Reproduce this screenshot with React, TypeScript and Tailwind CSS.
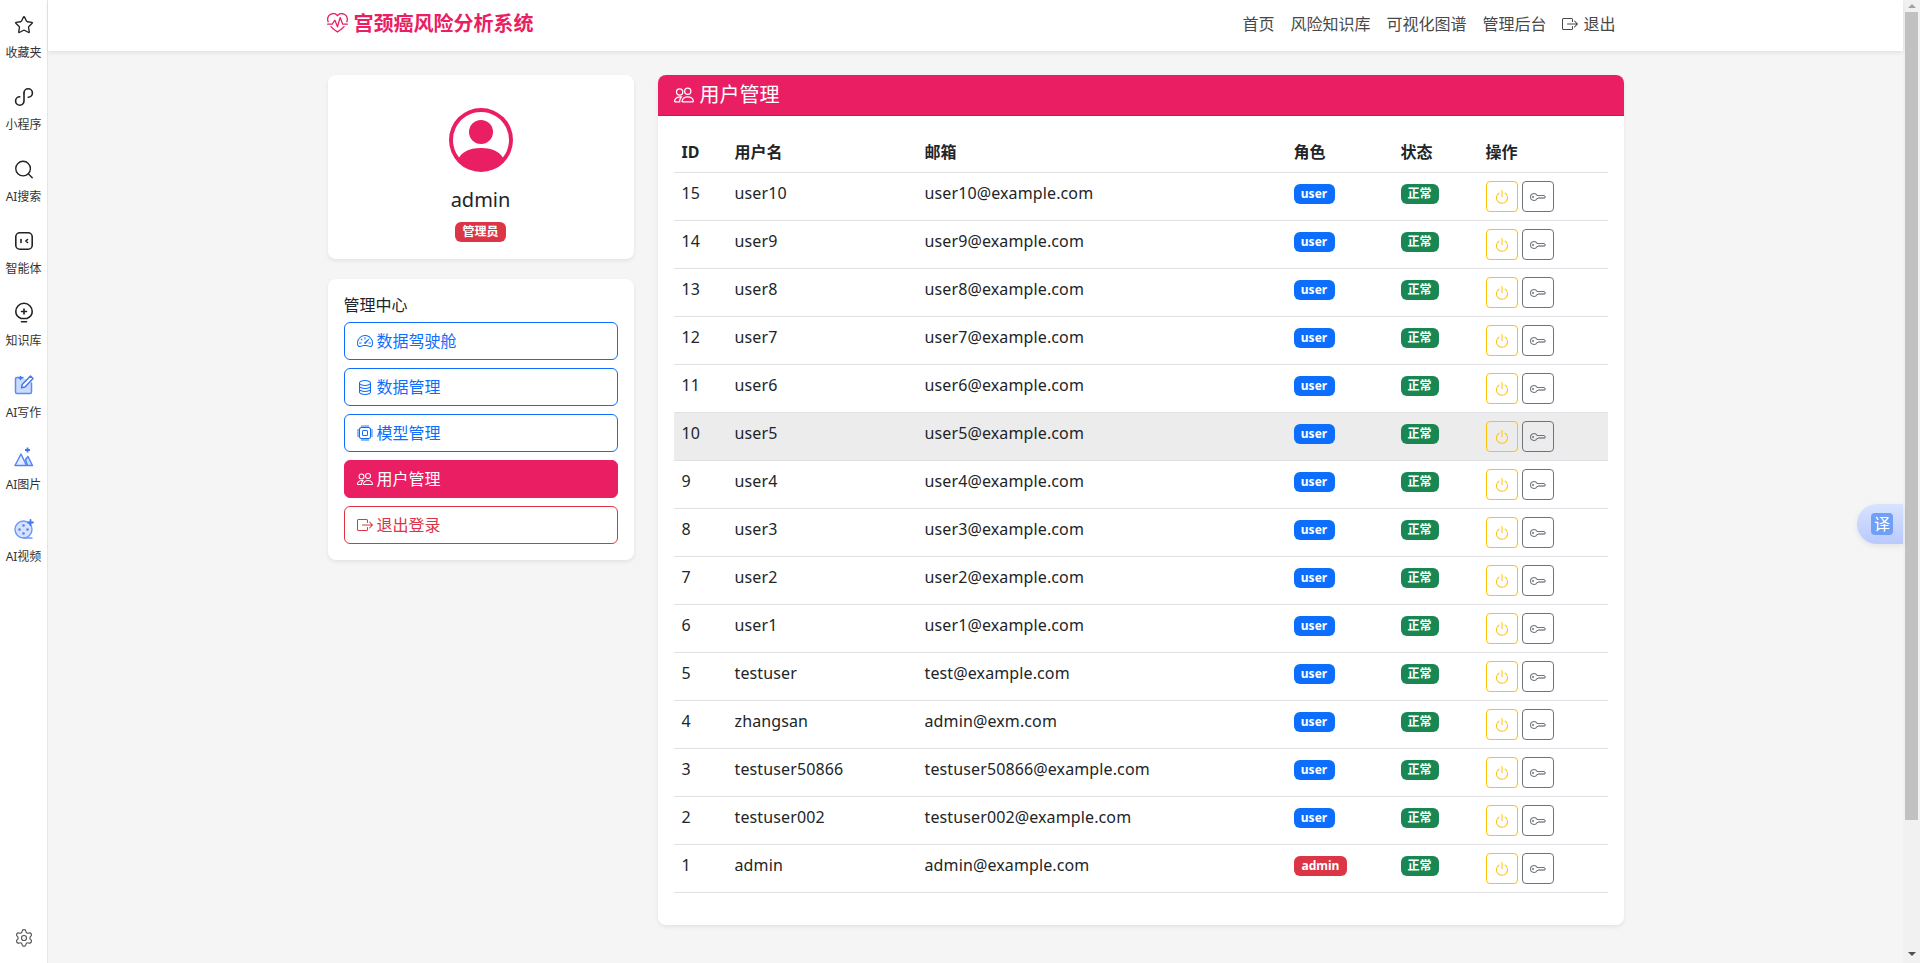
import { Search, Settings, Star } from 'lucide-react'
import {
  BsBoxArrowRight,
  BsCpu,
  BsDatabase,
  BsHeartPulse,
  BsKey,
  BsPeople,
  BsPersonCircle,
  BsPower,
  BsSpeedometer2,
} from 'react-icons/bs'

const users = [
  { id: 15, name: 'user10', email: 'user10@example.com', role: 'user' },
  { id: 14, name: 'user9', email: 'user9@example.com', role: 'user' },
  { id: 13, name: 'user8', email: 'user8@example.com', role: 'user' },
  { id: 12, name: 'user7', email: 'user7@example.com', role: 'user' },
  { id: 11, name: 'user6', email: 'user6@example.com', role: 'user' },
  { id: 10, name: 'user5', email: 'user5@example.com', role: 'user' },
  { id: 9, name: 'user4', email: 'user4@example.com', role: 'user' },
  { id: 8, name: 'user3', email: 'user3@example.com', role: 'user' },
  { id: 7, name: 'user2', email: 'user2@example.com', role: 'user' },
  { id: 6, name: 'user1', email: 'user1@example.com', role: 'user' },
  { id: 5, name: 'testuser', email: 'test@example.com', role: 'user' },
  { id: 4, name: 'zhangsan', email: 'admin@exm.com', role: 'user' },
  { id: 3, name: 'testuser50866', email: 'testuser50866@example.com', role: 'user' },
  { id: 2, name: 'testuser002', email: 'testuser002@example.com', role: 'user' },
  { id: 1, name: 'admin', email: 'admin@example.com', role: 'admin' },
]

function MiniIcon() {
  return (
    <svg width="22" height="22" viewBox="0 0 22 22" fill="none" stroke="#222" strokeWidth="1.6" strokeLinecap="round">
      <path d="M11 7v8a4.200 4.200 0 1 1-4.200-4.200" />
      <path d="M11 7a4.200 4.200 0 1 1 4.200 4.200" />
    </svg>
  )
}

function AgentIcon() {
  return (
    <svg width="22" height="22" viewBox="0 0 22 22" fill="none" stroke="#222" strokeWidth="1.6" strokeLinecap="round" strokeLinejoin="round">
      <rect x="2.800" y="2.800" width="16.400" height="16.400" rx="4" />
      <path d="M8 9.500v3" />
      <path d="M14.500 9.500 12.800 11l1.700 1.500" />
    </svg>
  )
}

function BulbIcon() {
  return (
    <svg width="22" height="22" viewBox="0 0 22 22" fill="none" stroke="#222" strokeWidth="1.6" strokeLinecap="round" strokeLinejoin="round">
      <path d="M8 16.500C4.500 15 2.800 12.500 2.800 9.500a8.200 8.200 0 0 1 16.400 0c0 3-1.700 5.500-5.200 7z" />
      <path d="M8.500 19.800h5" />
      <path d="M11 7v5M8.500 9.500h5" />
    </svg>
  )
}

function WriteIcon() {
  return (
    <svg width="22" height="22" viewBox="0 0 22 22" fill="none" stroke="#5b8cf8" strokeWidth="1.500" strokeLinecap="round" strokeLinejoin="round">
      <path d="M10 3.500H4a1.500 1.500 0 0 0-1.500 1.500v13A1.500 1.500 0 0 0 4 19.500h13a1.500 1.500 0 0 0 1.500-1.500V9" fill="#cddcfe" />
      <path d="M17.500 2 20 4.500l-8 8.500-3.500.8.700-3.300z" fill="#fff" stroke="#3f78f5" />
      <path d="M7.500 2.500v3M6 4h3" stroke="#3f78f5" />
    </svg>
  )
}

function ImageIcon() {
  return (
    <svg width="22" height="22" viewBox="0 0 22 22" fill="none" strokeWidth="1.400" strokeLinejoin="round">
      <path d="M2 19.500 8 8l5.500 11.500z" fill="#e6edff" stroke="#4f82f6" />
      <path d="M12.500 13.500 15 10.500l4.500 9h-5z" fill="#cddcfe" stroke="#4f82f6" />
      <path d="M14.500 1.500v5M12 4h5" stroke="#3f78f5" strokeWidth="1.800" />
    </svg>
  )
}

function VideoIcon() {
  return (
    <svg width="22" height="22" viewBox="0 0 22 22" fill="none" strokeWidth="1.400" strokeLinecap="round">
      <circle cx="10.500" cy="11.500" r="8.500" fill="#d5e1fe" stroke="#6c97f8" />
      <path d="M11 20h8" stroke="#6c97f8" />
      <circle cx="10.500" cy="7.500" r="1.300" fill="#4f82f6" />
      <circle cx="6.500" cy="11.500" r="1.300" fill="#4f82f6" />
      <circle cx="14.500" cy="11.500" r="1.300" fill="#4f82f6" />
      <circle cx="10.500" cy="15.500" r="1.300" fill="#4f82f6" />
      <path d="M17.500 2v5M15 4.500h5" stroke="#3f78f5" strokeWidth="1.800" />
    </svg>
  )
}

const sideItems = [
  { label: '收藏夹', icon: <Star size={20} strokeWidth={1.6} color="#222" /> },
  { label: '小程序', icon: <MiniIcon /> },
  { label: 'AI搜索', icon: <Search size={23} strokeWidth={1.5} color="#222" /> },
  { label: '智能体', icon: <AgentIcon /> },
  { label: '知识库', icon: <BulbIcon /> },
  { label: 'AI写作', icon: <WriteIcon /> },
  { label: 'AI图片', icon: <ImageIcon /> },
  { label: 'AI视频', icon: <VideoIcon /> },
]

const menu = [
  { label: '数据驾驶舱', icon: <BsSpeedometer2 size={16} />, cls: 'border-[#0d6efd] text-[#0d6efd]' },
  { label: '数据管理', icon: <BsDatabase size={16} />, cls: 'border-[#0d6efd] text-[#0d6efd]' },
  { label: '模型管理', icon: <BsCpu size={16} />, cls: 'border-[#0d6efd] text-[#0d6efd]' },
  { label: '用户管理', icon: <BsPeople size={16} />, cls: 'border-[#e91e63] bg-[#e91e63] text-white' },
  { label: '退出登录', icon: <BsBoxArrowRight size={16} />, cls: 'border-[#dc3545] text-[#dc3545]' },
]

function Sidebar() {
  return (
    <aside className="flex w-[48px] shrink-0 flex-col items-center justify-between border-r border-[#e6e6e6] bg-white">
      <div>
        {sideItems.map((item) => (
          <div key={item.label} className="flex h-[72px] w-[47px] flex-col items-center pt-[14px]">
            <div className="flex h-[22px] w-[22px] items-center justify-center">{item.icon}</div>
            <div className="mt-2 text-xs leading-[18px] whitespace-nowrap text-[#333]">{item.label}</div>
          </div>
        ))}
      </div>
      <div className="pb-[15px]">
        <Settings size={20} strokeWidth={1.4} color="#555" />
      </div>
    </aside>
  )
}

function Navbar() {
  const links = ['首页', '风险知识库', '可视化图谱', '管理后台']
  return (
    <header className="relative h-[51px] bg-white shadow-[0_2px_4px_rgba(0,0,0,0.08)]">
      <div className="mx-auto flex h-[47px] w-[1320px] items-center justify-between px-3">
        <div className="-ml-px flex items-center gap-[6px] text-[#e91e63]">
          <BsHeartPulse size={21} />
          <span className="text-xl leading-6 font-bold">宫颈癌风险分析系统</span>
        </div>
        <nav className="flex items-center text-[#484848]">
          {links.map((link) => (
            <a key={link} className="px-2 leading-6">
              {link}
            </a>
          ))}
          <a className="flex items-center gap-[5px] px-2 leading-6">
            <BsBoxArrowRight size={16} />
            退出
          </a>
        </nav>
      </div>
    </header>
  )
}

function ProfileCard() {
  return (
    <div className="flex h-[184px] flex-col items-center rounded-lg bg-white pt-[33px] shadow-[0_2px_4px_rgba(0,0,0,0.075)]">
      <BsPersonCircle size={64} className="text-[#e91e63]" />
      <div className="mt-[14px] text-xl leading-7 text-[#212529]">admin</div>
      <span className="mt-2 rounded-md bg-[#dc3545] px-[7px] text-xs leading-5 font-bold text-white">管理员</span>
    </div>
  )
}

function MenuCard() {
  return (
    <div className="mt-5 rounded-lg bg-white p-4 shadow-[0_2px_4px_rgba(0,0,0,0.075)]">
      <div className="-mt-[2px] mb-[5px] leading-6 text-[#212529]">管理中心</div>
      <div className="flex flex-col gap-2">
        {menu.map((item) => (
          <a key={item.label} className={`flex h-[38px] items-center gap-1 rounded-md border px-3 ${item.cls}`}>
            {item.icon}
            {item.label}
          </a>
        ))}
      </div>
    </div>
  )
}

function UserTable() {
  return (
    <table className="w-full table-fixed border-separate border-spacing-0 text-[#212529]">
      <colgroup>
        <col className="w-[53px]" />
        <col className="w-[190px]" />
        <col className="w-[369px]" />
        <col className="w-[107px]" />
        <col className="w-[85px]" />
        <col />
      </colgroup>
      <thead>
        <tr className="h-[41px] text-left">
          {['ID', '用户名', '邮箱', '角色', '状态', '操作'].map((title) => (
            <th key={title} className="border-b border-[#dee2e6] px-2 leading-6 font-bold">
              {title}
            </th>
          ))}
        </tr>
      </thead>
      <tbody>
        {users.map((user) => {
          const rowBg = user.id === 10 ? 'bg-[#ececec]' : ''
          const cell = `h-[48px] border-b border-[#dee2e6] px-2 pt-2 align-top leading-6 ${rowBg}`
          return (
            <tr key={user.id}>
              <td className={cell}>{user.id}</td>
              <td className={`${cell} tracking-[0.12px]`}>{user.name}</td>
              <td className={`${cell} tracking-[0.12px]`}>{user.email}</td>
              <td className={cell}>
                <span
                  className={
                    user.role === 'admin'
                      ? 'mt-[3px] block w-fit rounded-md bg-[#dc3545] px-2 text-xs leading-5 font-bold text-white'
                      : 'mt-[3px] block w-[41px] rounded-md bg-[#0d6efd] text-center text-xs leading-5 font-bold text-white'
                  }
                >
                  {user.role}
                </span>
              </td>
              <td className={cell}>
                <span className="mt-[3px] block w-fit rounded-md bg-[#198754] px-[7px] text-xs leading-5 font-bold text-white">
                  正常
                </span>
              </td>
              <td className={cell}>
                <div className="flex gap-1">
                  <button className="flex h-[31px] w-[32px] items-center justify-center rounded border border-[#ffc107] text-[#ffc107]">
                    <BsPower size={16} />
                  </button>
                  <button className="flex h-[31px] w-[32px] items-center justify-center rounded border border-[#6c757d] text-[#6c757d]">
                    <BsKey size={16} />
                  </button>
                </div>
              </td>
            </tr>
          )
        })}
      </tbody>
    </table>
  )
}

function FakeScrollbar() {
  return (
    <div className="flex w-[17px] shrink-0 flex-col items-center justify-between bg-[#f1f1f1]">
      <div className="flex h-[12px] w-full items-center justify-center">
        <div className="h-0 w-0 border-x-[4px] border-b-[4px] border-x-transparent border-b-[#a3a3a3]" />
      </div>
      <div className="h-[808px] w-[13px] bg-[#c1c1c1]" />
      <div className="flex-1" />
      <div className="flex h-[18px] w-full items-center justify-center">
        <div className="h-0 w-0 border-x-[4px] border-t-[4px] border-x-transparent border-t-[#505050]" />
      </div>
    </div>
  )
}

export default function App() {
  return (
    <div className="relative flex h-screen overflow-hidden bg-[#f5f5f5] font-['Noto_Sans','Noto_Sans_CJK_SC',sans-serif] text-base">
      <Sidebar />
      <div className="min-w-0 flex-1">
        <Navbar />
        <main className="mx-auto mt-6 flex w-[1320px] gap-6 px-3">
          <div className="w-[306px] shrink-0">
            <ProfileCard />
            <MenuCard />
          </div>
          <div className="w-[966px] overflow-hidden rounded-lg bg-white shadow-[0_2px_4px_rgba(0,0,0,0.075)]">
            <div className="flex h-[41px] items-center gap-[6px] border-b border-[#c81a55] bg-[#e91e63] px-4 text-xl leading-6 text-white">
              <BsPeople size={20} />
              用户管理
            </div>
            <div className="p-4 pb-8">
              <UserTable />
            </div>
          </div>
        </main>
      </div>
      <FakeScrollbar />
      <div className="absolute top-[504px] right-[17px] flex h-[40px] w-[46px] items-center rounded-l-[20px] bg-gradient-to-b from-[#d8e3fe] to-[#b9c9fd] pl-[14px] shadow-[0_2px_6px_rgba(0,0,0,0.08)]">
        <div className="flex h-[22px] w-[22px] items-center justify-center rounded bg-[#6fa0f5] text-base leading-none text-white">
          译
        </div>
      </div>
    </div>
  )
}
